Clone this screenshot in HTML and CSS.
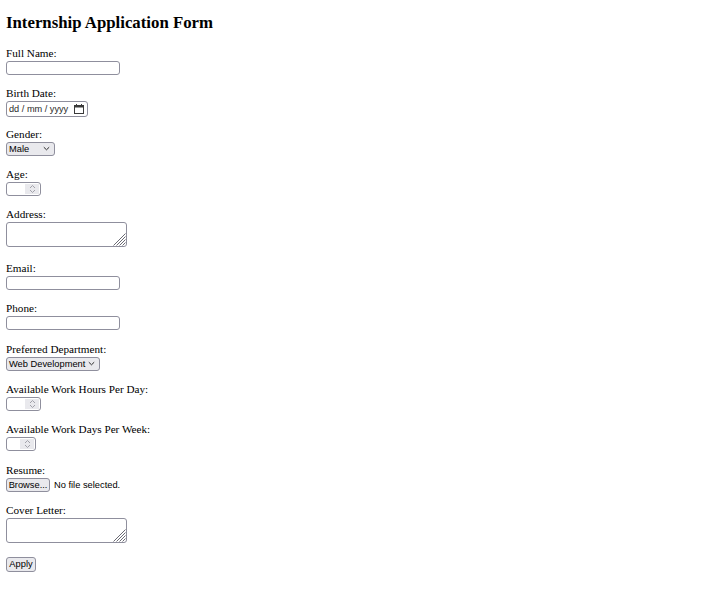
FILE: index.html
```html
<!DOCTYPE html>
<html lang="en">
<head>
<meta charset="utf-8">
<title>Internship Application Form</title>
<link rel="stylesheet" href="styles.css">
</head>
<body>
<main class="page">
  <h3 class="title">Internship Application Form</h3>
  <form class="form">
    <div class="field">
      <label class="label" for="fullname">Full Name:</label>
      <input class="ctl text-input" id="fullname" type="text">
    </div>
    <div class="field">
      <span class="label">Birth Date:</span>
      <div class="ctl date">
        <span class="date-text">dd / mm / yyyy</span>
        <svg class="cal" width="10" height="10" viewBox="0 0 10 10" aria-hidden="true">
          <rect x="0.5" y="1.5" width="9" height="8" fill="none" stroke="#3b3b3b"/>
          <rect x="0.5" y="1.5" width="9" height="2" fill="#3b3b3b"/>
          <rect x="2" y="0" width="1" height="2" fill="#3b3b3b"/>
          <rect x="7" y="0" width="1" height="2" fill="#3b3b3b"/>
        </svg>
      </div>
    </div>
    <div class="field">
      <span class="label">Gender:</span>
      <div class="ctl select select-gender">
        <span class="select-text">Male</span>
        <svg class="chev" width="7" height="5" viewBox="0 0 7 5" aria-hidden="true"><path d="M0.8 1.2 L3.5 3.8 L6.2 1.2" fill="none" stroke="#2b2b2b" stroke-width="1"/></svg>
      </div>
    </div>
    <div class="field">
      <span class="label">Age:</span>
      <div class="ctl number num-35">
        <span class="num-field"></span>
        <span class="spin">
          <svg width="7" height="10" viewBox="0 0 7 10" aria-hidden="true"><path d="M1 4 L3.5 1.5 L6 4 M1 6 L3.5 8.5 L6 6" fill="none" stroke="#9a9aa3" stroke-width="0.9"/></svg>
        </span>
      </div>
    </div>
    <div class="field field-tall">
      <label class="label" for="address">Address:</label>
      <div class="ta-wrap">
        <textarea class="ctl textarea" id="address"></textarea>
        <svg class="grip" width="13" height="13" viewBox="0 0 13 13" aria-hidden="true"><path d="M12.5 0.5 L0.5 12.5 M12.5 3.5 L3.5 12.5 M12.5 6.5 L6.5 12.5 M12.5 9.5 L9.5 12.5" fill="none" stroke="#6b6b74" stroke-width="1"/></svg>
      </div>
    </div>
    <div class="field">
      <label class="label" for="email">Email:</label>
      <input class="ctl text-input" id="email" type="text">
    </div>
    <div class="field">
      <label class="label" for="phone">Phone:</label>
      <input class="ctl text-input" id="phone" type="text">
    </div>
    <div class="field">
      <span class="label">Preferred Department:</span>
      <div class="ctl select select-dept">
        <span class="select-text">Web Development</span>
        <svg class="chev" width="7" height="5" viewBox="0 0 7 5" aria-hidden="true"><path d="M0.8 1.2 L3.5 3.8 L6.2 1.2" fill="none" stroke="#2b2b2b" stroke-width="1"/></svg>
      </div>
    </div>
    <div class="field">
      <span class="label">Available Work Hours Per Day:</span>
      <div class="ctl number num-35">
        <span class="num-field"></span>
        <span class="spin">
          <svg width="7" height="10" viewBox="0 0 7 10" aria-hidden="true"><path d="M1 4 L3.5 1.5 L6 4 M1 6 L3.5 8.5 L6 6" fill="none" stroke="#9a9aa3" stroke-width="0.9"/></svg>
        </span>
      </div>
    </div>
    <div class="field">
      <span class="label">Available Work Days Per Week:</span>
      <div class="ctl number num-30">
        <span class="num-field"></span>
        <span class="spin">
          <svg width="7" height="10" viewBox="0 0 7 10" aria-hidden="true"><path d="M1 4 L3.5 1.5 L6 4 M1 6 L3.5 8.5 L6 6" fill="none" stroke="#9a9aa3" stroke-width="0.9"/></svg>
        </span>
      </div>
    </div>
    <div class="field">
      <span class="label">Resume:</span>
      <div class="file">
        <span class="btn browse">Browse...</span>
        <span class="file-text">No file selected.</span>
      </div>
    </div>
    <div class="field field-tall">
      <label class="label" for="cover">Cover Letter:</label>
      <div class="ta-wrap">
        <textarea class="ctl textarea" id="cover"></textarea>
        <svg class="grip" width="13" height="13" viewBox="0 0 13 13" aria-hidden="true"><path d="M12.5 0.5 L0.5 12.5 M12.5 3.5 L3.5 12.5 M12.5 6.5 L6.5 12.5 M12.5 9.5 L9.5 12.5" fill="none" stroke="#6b6b74" stroke-width="1"/></svg>
      </div>
    </div>
    <div class="submit-row">
      <button class="btn apply" type="button">Apply</button>
    </div>
  </form>
</main>
</body>
</html>
```

FILE: styles.css
```css
html, body {
  background: #ffffff;
}

body {
  margin: 0;
  font-family: "Liberation Serif", "Times New Roman", serif;
  font-size: 11.2px;
  color: #000000;
}

.page {
  padding: 0 6px;
}

.title {
  margin: 13px 0 14px;
  font-size: 16.8px;
  line-height: 19px;
  font-weight: bold;
}

.form {
  display: flex;
  flex-direction: column;
}

.field {
  display: grid;
  grid-template-rows: 15px minmax(25.3px, auto);
  align-items: start;
  justify-items: start;
}

.field-tall .ta-wrap {
  margin-bottom: 14px;
}

.label {
  display: block;
  line-height: 15px;
}

.ctl {
  box-sizing: border-box;
  border: 1px solid #8f8f9d;
  border-radius: 3px;
  background: #ffffff;
  font-family: "Liberation Sans", Arial, sans-serif;
  font-size: 9.3px;
  color: #000000;
  margin: 0;
}

.text-input {
  width: 114px;
  height: 14px;
  padding: 0 2px;
  outline: none;
}

.date {
  width: 82px;
  height: 16px;
  display: flex;
  align-items: center;
  justify-content: space-between;
  padding: 0 3px 0 2px;
}

.date-text {
  color: #2a2a2a;
  font-size: 9.2px;
  line-height: 14px;
}

.cal {
  display: block;
}

.select {
  height: 14px;
  background: #e9e9ed;
  display: flex;
  align-items: center;
  justify-content: space-between;
  padding: 0 4px 0 2px;
}

.select-gender {
  width: 49px;
}

.select-dept {
  width: 94px;
}

.select-text {
  line-height: 12px;
}

.chev {
  display: block;
}

.number {
  height: 14px;
  display: flex;
  padding: 0;
  overflow: hidden;
}

.num-35 {
  width: 35px;
}

.num-30 {
  width: 30px;
}

.num-field {
  flex: 1;
}

.spin {
  width: 14px;
  background: #e9e9ed;
  display: flex;
  align-items: center;
  justify-content: center;
  margin: 1px 1px 1px 0;
}

.spin svg {
  display: block;
}

.ta-wrap {
  position: relative;
  width: 121px;
  height: 25px;
}

.textarea {
  display: block;
  width: 121px;
  height: 25px;
  resize: none;
  padding: 1px 2px;
  outline: none;
}

.grip {
  position: absolute;
  right: 1px;
  bottom: 1px;
}

.file {
  display: flex;
  align-items: center;
  gap: 4px;
  height: 14px;
}

.btn {
  box-sizing: border-box;
  display: flex;
  align-items: center;
  justify-content: center;
  height: 14px;
  border: 1px solid #8f8f9d;
  border-radius: 3px;
  background: #e9e9ed;
  font-family: "Liberation Sans", Arial, sans-serif;
  font-size: 9.3px;
  color: #000000;
  padding: 0;
  margin: 0;
}

.browse {
  width: 44px;
}

.file-text {
  font-family: "Liberation Sans", Arial, sans-serif;
  font-size: 9.3px;
  line-height: 14px;
}

.submit-row {
  display: flex;
}

.apply {
  width: 30px;
  height: 15px;
}
```
